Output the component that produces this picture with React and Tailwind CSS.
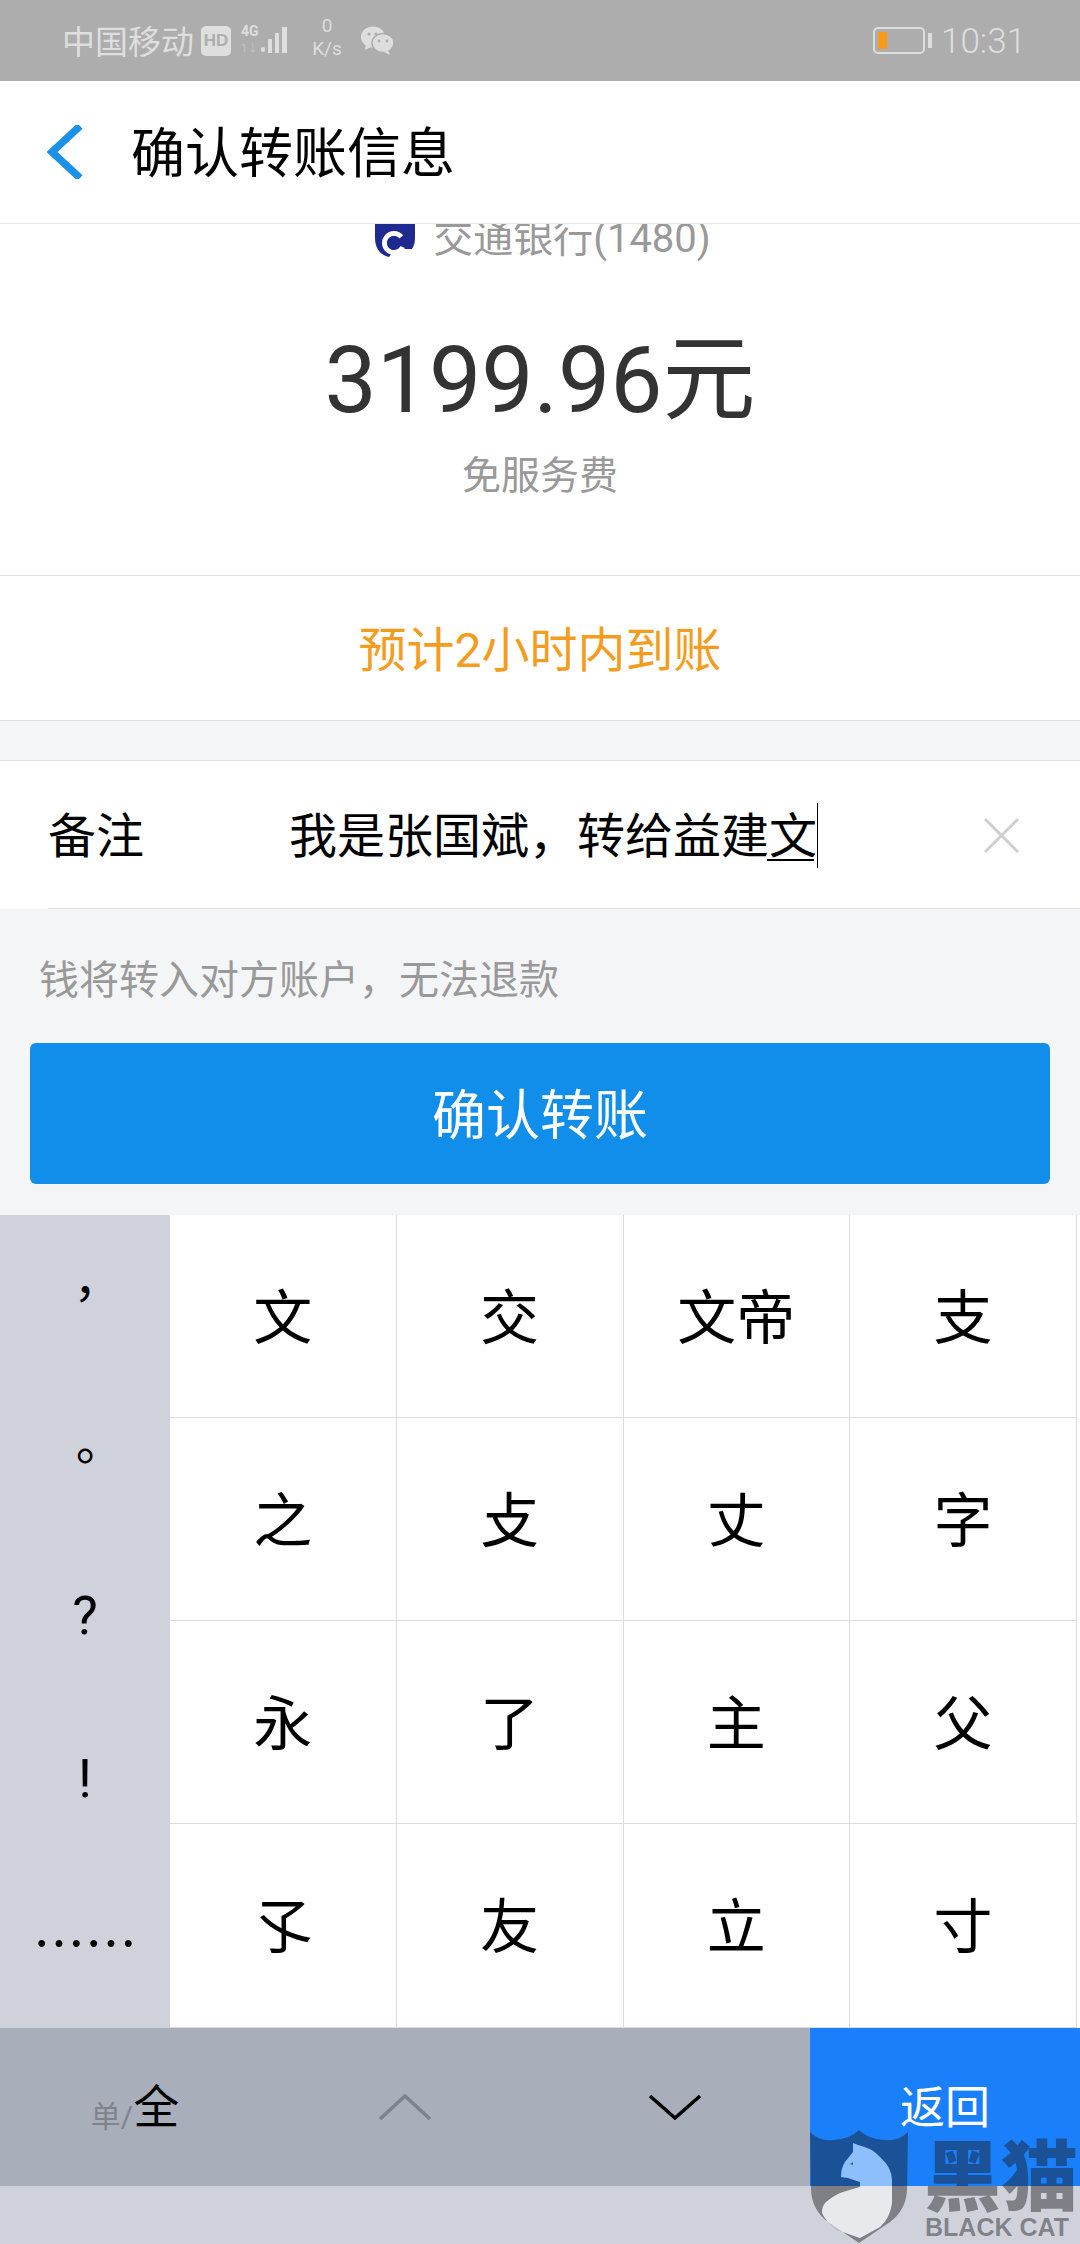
import React from "react";

const KEYS = ["文", "交", "文帝", "支", "之", "攴", "丈", "字", "永", "了", "主", "父", "孓", "友", "立", "寸"];

const StatusBar = () => (
  <div className="h-[81px] bg-[#adadad] text-[#dedede] flex items-center relative pl-[62px]">
    <span className="text-[33px] leading-none mt-[3px]">中国移动</span>
    <span className="ml-[7px] w-[30px] h-[30px] rounded-[5px] bg-[#dedede] text-[#adadad] text-[17px] font-bold flex items-center justify-center font-['Liberation_Sans']">
      HD
    </span>
    <div className="ml-[10px] w-[50px] h-[32px] relative">
      <svg width="50" height="32" viewBox="0 0 50 32" fill="#dedede">
        <rect x="20" y="22" width="4" height="5" rx="2" />
        <rect x="27" y="14" width="4" height="14" />
        <rect x="34" y="8" width="4" height="20" />
        <rect x="41" y="2" width="5" height="26" />
      </svg>
      <span className="absolute left-0 -top-[1px] text-[14px] leading-none font-bold">4G</span>
      <span className="absolute left-0 bottom-[3px] text-[11px] leading-none text-[#c4c4c4]">1↓</span>
    </div>
    <div className="ml-[19px] w-[34px] flex flex-col items-center text-[19px] leading-[23px] -mt-[7px]">
      <span>0</span>
      <span>K/s</span>
    </div>
    <svg className="ml-[17px]" width="33" height="29" viewBox="0 0 33 29">
      <ellipse cx="12" cy="11" rx="12" ry="10.5" fill="#dedede" />
      <path d="M5 18l-1 6 6-3z" fill="#dedede" />
      <ellipse cx="22" cy="17" rx="11" ry="9.5" fill="#dedede" stroke="#adadad" strokeWidth="1.5" />
      <path d="M27 24l2 5-6-3z" fill="#dedede" />
      <circle cx="8" cy="8" r="1.6" fill="#adadad" />
      <circle cx="15" cy="8" r="1.6" fill="#adadad" />
      <circle cx="18" cy="15" r="1.4" fill="#adadad" />
      <circle cx="26" cy="15" r="1.4" fill="#adadad" />
    </svg>
    <div className="absolute right-[155px] top-[27px] w-[52px] h-[27px] rounded-[5px] border-2 border-[#dedede] p-[3px]">
      <div className="w-[9px] h-full bg-[#f89a1c]"></div>
    </div>
    <div className="absolute right-[148px] top-[33px] w-[4px] h-[15px] bg-[#dedede]"></div>
    <span className="absolute right-[54px] top-[24px] text-[35px] leading-[35px] font-light">10:31</span>
  </div>
);

const BankLogo = () => (
  <svg width="40" height="33" viewBox="0 0 40 33">
    <path d="M0 0h40v14c0 4-1 8-3 11H20l-6 8C5 31 0 24 0 14z" fill="#1f2a90" />
    <path d="M26.3 12.9A9.5 9.5 0 1 0 27.6 23" fill="none" stroke="#fff" strokeWidth="5" />
    <circle cx="19" cy="19" r="7" fill="#1f2a90" />
    <path d="M24 18h8v2h-8z" fill="#1f2a90" />
  </svg>
);

const Watermark = () => (
  <div className="absolute left-[810px] top-[2130px] w-[270px] h-[114px] pointer-events-none">
    <svg className="absolute left-0 top-0" width="98" height="114" viewBox="0 0 98 114">
      <path
        fillRule="evenodd"
        fill="#1c1c1c"
        fillOpacity="0.45"
        d="M0 2Q10 12 24 10Q40 9 49 0Q58 9 74 10Q88 12 98 2L97 60Q96 80 80 92L49 113L18 92Q2 80 1 60Z M43 13L48 15Q62 18 70 27Q82 38 82 50L82 73Q80 88 70 97L50 108L27 100Q16 92 12 83Q12 77 15 73Q24 65 33 62L50 57L50 52L38 48L31 47Q31 38 35 32L43 22Z"
      />
      <path
        fill="#fff"
        fillOpacity="0.5"
        d="M43 13L48 15Q62 18 70 27Q82 38 82 50L82 73Q80 88 70 97L50 108L27 100Q16 92 12 83Q12 77 15 73Q24 65 33 62L50 57L50 52L38 48L31 47Q31 38 35 32L43 22Z"
      />
      <path d="M40 34l3-2 0 3z" fill="#1c1c1c" fillOpacity="0.6" />
    </svg>
    <span className="absolute left-[114px] top-[3px] text-[77px] leading-[77px] font-black text-[#1c1c1c]/45 whitespace-nowrap font-['Noto_Sans_CJK_SC']">
      黑猫
    </span>
    <span className="absolute left-[115px] top-[85px] text-[25px] leading-[25px] font-bold text-[#1c1c1c]/45 whitespace-nowrap font-['Liberation_Sans']">
      BLACK CAT
    </span>
  </div>
);

const Keyboard = () => (
  <div className="bg-[#cfd2db]">
    <div className="flex h-[813px] bg-white">
      <div className="w-[170px] bg-[#cfd2db] flex flex-col text-black">
        <div className="flex-1 flex items-center justify-center text-[48px] -translate-y-[6px] font-['Noto_Sans_CJK_TC']">，</div>
        <div className="flex-1 flex items-center justify-center text-[48px] -translate-y-[6px] font-['Noto_Sans_CJK_TC']">。</div>
        <div className="flex-1 flex items-center justify-center text-[54px] -translate-y-[6px]">?</div>
        <div className="flex-1 flex items-center justify-center text-[54px] -translate-y-[6px]">!</div>
        <div className="flex-1 flex items-center justify-center text-[52px] -translate-y-[6px] font-['Noto_Sans_CJK_SC']">……</div>
      </div>
      <div className="w-[907px] grid grid-cols-4 grid-rows-[203px_203px_203px_204px]">
        {KEYS.map((k) => (
          <div key={k} className="flex items-center justify-center pt-[4px] text-[59px] leading-none text-black border-r border-b border-[#dcdcdc]">
            {k}
          </div>
        ))}
      </div>
    </div>
    <div className="h-[158px] bg-[#a8aeba] flex">
      <div className="w-[270px] flex items-end justify-center pb-[56px] text-[#7f838c]">
        <span className="text-[30px] leading-[30px] -mb-[2px]">单/</span>
        <span className="text-[46px] leading-[46px] text-black">全</span>
      </div>
      <div className="w-[270px] flex items-center justify-center">
        <svg width="54" height="26" viewBox="0 0 54 26" fill="none" stroke="#7d838c" strokeWidth="3.5">
          <path d="M2 25L27 2l25 23" />
        </svg>
      </div>
      <div className="w-[270px] flex items-center justify-center">
        <svg width="54" height="26" viewBox="0 0 54 26" fill="none" stroke="#000" strokeWidth="3.5">
          <path d="M2 2l25 22L52 2" />
        </svg>
      </div>
      <div className="flex-1 bg-[#1a7ffb] flex items-center justify-center pt-[2px] text-[45px] leading-none text-white">返回</div>
    </div>
    <div className="h-[58px]"></div>
  </div>
);

export default function App() {
  return (
    <div className="relative w-[1080px] h-[2244px] overflow-hidden bg-[#f4f5f6] font-[Roboto,'Noto_Sans_CJK_SC',sans-serif]">
      <StatusBar />

      <div className="h-[143px] bg-white border-b border-[#e6e6e6] flex items-center pl-[47px]">
        <svg width="36" height="54" viewBox="0 0 36 54" fill="none" stroke="#1a90e8" strokeWidth="7.5">
          <path d="M33 1L5 27l28 26" />
        </svg>
        <span className="ml-[48px] pt-[5px] text-[54px] leading-none text-black">确认转账信息</span>
      </div>

      <div className="h-[352px] bg-white border-b border-[#dedede] overflow-hidden flex flex-col items-center">
        <div className="flex items-start h-[33px] gap-[18px] ml-[6px]">
          <BankLogo />
          <span className="text-[40px] leading-[40px] text-[#999] -mt-[5px]">交通银行(1480)</span>
        </div>
        <div className="mt-[69px] text-[93px] leading-[110px] text-[#333]">3199.96元</div>
        <div className="mt-[17px] text-[39px] leading-[46px] text-[#999]">免服务费</div>
      </div>

      <div className="h-[145px] bg-white border-b border-[#dedede] flex items-center justify-center pt-[5px] text-[48px] text-[#f39c1e]">
        预计2小时内到账
      </div>

      <div className="h-[40px] border-b border-[#dedede]"></div>

      <div className="h-[148px] bg-white flex items-center pl-[48px] relative">
        <span className="w-[241px] pt-[4px] text-[48px] leading-none text-black">备注</span>
        <div className="flex items-center text-[48px] leading-[48px] text-black">
          <span className="pt-[4px]">我是张国斌，转给益建文</span>
          <span className="w-px h-[65px] bg-black"></span>
        </div>
        <svg className="absolute left-[983px] top-[56px]" width="37" height="37" viewBox="0 0 37 37" stroke="#cfcfcf" strokeWidth="3">
          <path d="M2 2l33 33M35 2L2 35" />
        </svg>
        <div className="absolute left-[767px] top-[98px] w-[47px] h-[2px] bg-black"></div>
        <div className="absolute left-[48px] right-0 bottom-0 h-px bg-[#dedede]"></div>
      </div>

      <div className="h-[306px] px-[30px] pt-[48px]">
        <div className="pl-[9px] text-[40px] leading-[48px] text-[#999]">钱将转入对方账户，无法退款</div>
        <div className="mt-[38px] h-[141px] rounded-[6px] bg-[#118eea] flex items-center justify-center pt-[7px] text-[54px] leading-none text-white">
          确认转账
        </div>
      </div>

      <Keyboard />
      <Watermark />
    </div>
  );
}
